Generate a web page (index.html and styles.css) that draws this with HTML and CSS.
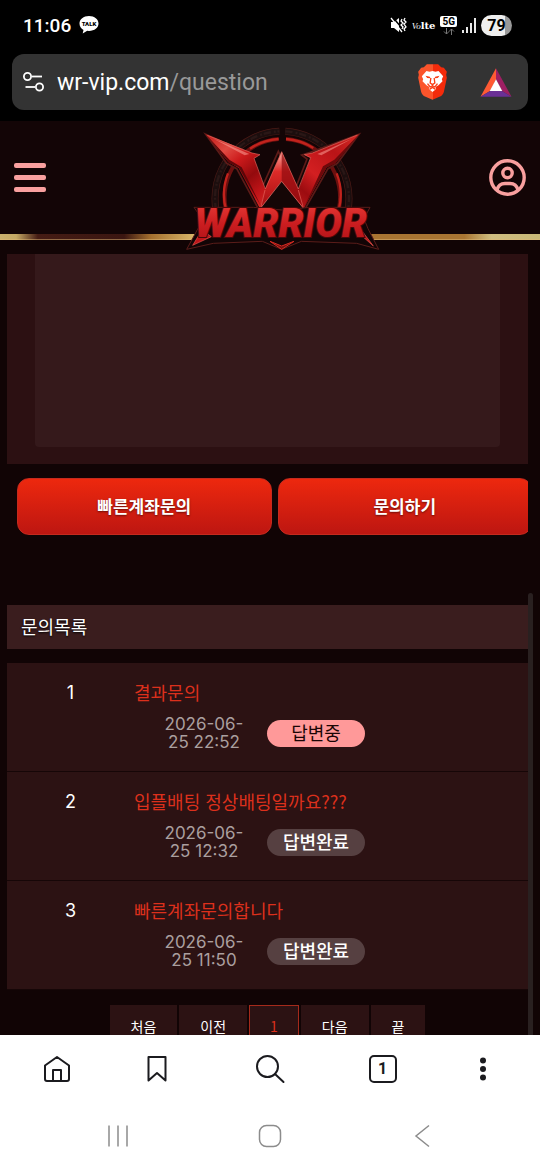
FILE: index.html
```html
<!DOCTYPE html>
<html lang="ko">
<head>
    <meta charset="UTF-8">
    <meta name="viewport" content="width=device-width, initial-scale=1.0">
    <title>문의목록 - WARRIOR</title>
    <link rel="stylesheet" href="styles.css">
</head>
<body>
    <div class="status-bar">
        <div class="status-left">
            <span class="clock">11:06</span>
            <svg class="talk" viewBox="0 0 20 18" width="20" height="18">
                <path d="M10 0C4.500 0 .5 3.300.5 7.500c0 2.700 1.500 5 4 6.400L3.700 17.500l4.500-2.800 1.800.2c5.500 0 9.500-3.300 9.500-7.400S15.500 0 10 0z" fill="#fff"/>
                <text x="10" y="10" text-anchor="middle">TALK</text>
            </svg>
        </div>
        <div class="status-right">
            <svg viewBox="0 0 17 16" width="17" height="16">
                <path d="M1 5h3l5-4v14l-5-4H1z" fill="#fff"/>
                <path d="M2.500 0l12 14" stroke="#000" stroke-width="1.500"/>
                <path d="M1 1l11 14M12 2l-1 2 2 2-2 2 2 2-1 2M15 1l-1 2 2 2-2 2 2 3-2 2 1 2" fill="none" stroke="#fff" stroke-width="1.300"/>
            </svg>
            <span class="volte"><i>Vo</i>lte</span>
            <span class="network">
                <b>5G</b>
                <svg viewBox="0 0 12 7" width="12" height="7"><path d="M3.500 0v6M1 3.500L3.500 6 6 3.500M8.500 7V1M6 3.500L8.500 1 11 3.500" fill="none" stroke="#777"/></svg>
            </span>
            <svg viewBox="0 0 14 15" width="14" height="15"><path d="M1 12v3M5 9v6M9 5v10M13 0v15" stroke="#fff" stroke-width="1.800"/></svg>
            <span class="battery">79</span>
        </div>
    </div>

    <div class="address-bar">
        <button class="tune" aria-label="사이트 설정">
            <svg viewBox="0 0 22 20" width="22" height="20" fill="none" stroke="#fff" stroke-width="1.800">
                <circle cx="4.500" cy="4.500" r="3.600"/><path d="M9 4.500h10"/>
                <circle cx="16.500" cy="15" r="3.600"/><path d="M2.500 15H12"/>
            </svg>
        </button>
        <button class="url">wr-vip.com<span>/question</span></button>
        <button class="shield" aria-label="Brave Shields">
            <svg viewBox="0 0 92 108" width="31" height="36">
                <defs>
                    <linearGradient id="brave" x1="0" x2="1"><stop offset=".5" stop-color="#fb542b"/><stop offset=".5" stop-color="#f42b0b"/></linearGradient>
                </defs>
                <path d="M29 1h34l9 9 8 1 9 12-2 9 2 9-9 43q-2 8-8 12L46 107 20 96q-6-4-8-12L3 41l2-9-2-9 9-12 8-1z" fill="url(#brave)"/>
                <path d="M28 21l9 2 9-2 9 2 9-2 14 16-4 9 2 6-12 12-9 5 2 6-11 9-11-9 2-6-9-5-12-12 2-6-4-9z" fill="#fff"/>
                <path d="M25 35l13 3 2 5-10-1zM67 35l-13 3-2 5 10-1z" fill="#f93d15"/>
                <path d="M41 42l-2 15 7 5 7-5-2-15M31 59l8 10 7-4 7 4 8-10M37 76l9-6 9 6" fill="none" stroke="#f93d15" stroke-width="4"/>
            </svg>
        </button>
        <button class="rewards" aria-label="Brave Rewards">
            <svg viewBox="0 0 96 88" width="32" height="29">
                <path d="M48 1L1 87l29-17 18-35z" fill="#ff5a34"/>
                <path d="M48 1l47 86-29-17-18-35z" fill="#9e1f63"/>
                <path d="M1 87h94L66 70H30z" fill="#6a3096"/>
                <path d="M48 34L29 70h38z" fill="#fff"/>
            </svg>
        </button>
    </div>

    <div class="page">
        <header class="header">
            <button class="menu" aria-label="메뉴"><span></span><span></span><span></span></button>
            <a class="logo" href="#" aria-label="WARRIOR">
                <svg viewBox="0 0 660 420" width="220" height="140">
                    <defs>
                        <linearGradient id="wing-left" gradientUnits="userSpaceOnUse" x1="107" y1="43" x2="300" y2="265">
                            <stop offset="0" stop-color="#c01a18"/><stop offset=".25" stop-color="#e04a42"/><stop offset=".42" stop-color="#cc1a1b"/><stop offset=".62" stop-color="#930a0d"/><stop offset=".8" stop-color="#c01418"/><stop offset="1" stop-color="#d93029"/>
                        </linearGradient>
                        <linearGradient id="wing-right" gradientUnits="userSpaceOnUse" x1="567" y1="43" x2="370" y2="265">
                            <stop offset="0" stop-color="#d22a24"/><stop offset=".3" stop-color="#b91417"/><stop offset=".6" stop-color="#d31f21"/><stop offset=".8" stop-color="#9c0c10"/><stop offset="1" stop-color="#bd181a"/>
                        </linearGradient>
                        <linearGradient id="peak" x1="0" y1="0" x2="0" y2="1">
                            <stop offset="0" stop-color="#ffb0a5"/><stop offset=".35" stop-color="#dd2b28"/><stop offset="1" stop-color="#a30c10"/>
                        </linearGradient>
                        <linearGradient id="letters" x1="0" y1="0" x2="0" y2="1">
                            <stop offset="0" stop-color="#e93c38"/><stop offset=".5" stop-color="#cb1d20"/><stop offset="1" stop-color="#ac1116"/>
                        </linearGradient>
                    </defs>
                    <g fill="none">
                        <path d="M138 270A202 202 0 0 1 328 34M346 34A202 202 0 0 1 534 270" stroke="#4a1a16" stroke-width="21"/>
                        <path d="M138 270A202 202 0 0 1 328 34M346 34A202 202 0 0 1 534 270" stroke="#1c0e0e" stroke-width="17"/>
                        <path d="M138 270A202 202 0 0 1 328 34M346 34A202 202 0 0 1 534 270" stroke="#2a1716" stroke-width="7" stroke-dasharray="22 9 6 5"/>
                        <path d="M168 270A175 175 0 0 1 326 57M348 57A175 175 0 0 1 506 270" stroke="#6c100f" stroke-width="12"/>
                        <path d="M168 270A175 175 0 0 1 174 160M500 160A175 175 0 0 1 506 270M240 86A175 175 0 0 1 326 57M348 57A175 175 0 0 1 430 84" stroke="#c2231d" stroke-width="7"/>
                    </g>
                    <path d="M107 43L170 130l30 16 68 126h134l72-126 28-16 65-87-146 54-26 8 16 12-36 92-50-115-52 115-35-94 18-10-26-8z" fill="#150606" stroke="#5d1b18" stroke-width="5"/>
                    <path d="M107 43l139 56 24 5-18 11 34 94 14 17-30 40-64-122-31-18z" fill="url(#wing-left)"/>
                    <path d="M567 43L426 99l-24 5 20 10-37 95-14 17 30 40 69-124 28-16z" fill="url(#wing-right)"/>
                    <path d="M107 43l72 77 36 22 59 118-68-118-29-13z" fill="#5c0709"/>
                    <path d="M567 43l-74 76-34 20-56 121 67-117 26-12z" fill="#6d090b"/>
                    <path d="M335 95l-50 113-15 58 65-83 66 83-16-58z" fill="url(#peak)"/>
                    <path d="M335 95v88l66 83-16-58z" fill="#8f0a0e" opacity=".7"/>
                    <path d="M128 55l110 47-14 4zM546 56l-104 46 12 4z" fill="#ffaaa0" opacity=".5"/>
                    <path d="M112 46l134 53 24 5-18 11 34 92 49-112 50 112 37-94-19-9 24-5 135-54M285 210l-12 50M385 210l14 50" fill="none" stroke="#e5675e" stroke-width="2"/>
                    <path d="M335 184l-63 80M335 184l65 80" fill="none" stroke="#f07a70" stroke-width="2"/>
                    <path d="M72 262H250L335 270 420 262H600L582 296 594 326 626 388 560 370 394 364 335 388 277 364 130 370 50 388 98 300z" fill="#120506" stroke="#5b1d1a" stroke-width="3"/>
                    <path d="M300 364l35 14 37-14-37 24z" fill="#74110f" stroke="#d52b22" stroke-width="3"/>
                    <path d="M96 330L68 376l56-26zM556 330l54 48-36-48z" fill="#bd151a" stroke="#e8544b" stroke-width="2"/>
                    <text class="logo-text" x="332" y="352" text-anchor="middle">WARRIOR</text>
                </svg>
            </a>
            <button class="user" aria-label="내 정보">
                <svg viewBox="0 0 37 37" width="37" height="37" fill="none" stroke="#f9a09f" stroke-width="3.400">
                    <circle cx="18.500" cy="18.500" r="16.700"/><circle cx="18.500" cy="14" r="4.700"/>
                    <path d="M8 31c1-4 4-6.500 8-6.500h5c4 0 7 2.500 8 6.500"/>
                </svg>
            </button>
        </header>

        <main class="content">
            <div class="write-box">
                <textarea class="write-text" aria-label="문의내용"></textarea>
            </div>
            <div class="write-buttons">
                <button class="btn-red">빠른계좌문의</button>
                <button class="btn-red">문의하기</button>
            </div>
            <h2 class="list-title">문의목록</h2>
            <ul class="question-list">
                <li class="question">
                    <span class="num">1</span>
                    <div class="info">
                        <a href="#">결과문의</a>
                        <div class="meta"><time>2026-06-<br>25 22:52</time><span class="badge wait">답변중</span></div>
                    </div>
                </li>
                <li class="question">
                    <span class="num">2</span>
                    <div class="info">
                        <a href="#">입플배팅 정상배팅일까요???</a>
                        <div class="meta"><time>2026-06-<br>25 12:32</time><span class="badge">답변완료</span></div>
                    </div>
                </li>
                <li class="question">
                    <span class="num">3</span>
                    <div class="info">
                        <a href="#">빠른계좌문의합니다</a>
                        <div class="meta"><time>2026-06-<br>25 11:50</time><span class="badge">답변완료</span></div>
                    </div>
                </li>
            </ul>
            <nav class="pagination">
                <a href="#">처음</a>
                <a href="#">이전</a>
                <a href="#" class="active">1</a>
                <a href="#">다음</a>
                <a href="#">끝</a>
            </nav>
        </main>
        <div class="scrollbar"></div>
    </div>

    <nav class="toolbar">
        <button aria-label="홈">
            <svg viewBox="0 0 28 28" width="28" height="28"><path d="M2 10.500L14 2l12 8.500V24q0 2-2 2H4q-2 0-2-2zM10 26V15h8v11"/></svg>
        </button>
        <button aria-label="북마크">
            <svg viewBox="0 0 28 28" width="28" height="28"><path d="M5.500 2h17v23.500L14 18l-8.500 7.500z"/></svg>
        </button>
        <button class="search" aria-label="검색">
            <svg viewBox="0 0 30 30" width="30" height="30"><circle cx="12.500" cy="12.500" r="10.500"/><path d="M20 20l8.500 8"/></svg>
        </button>
        <button aria-label="탭"><span class="tab-count">1</span></button>
        <button aria-label="더보기">
            <svg class="dots" viewBox="0 0 28 28" width="28" height="28"><circle cx="14" cy="5.500" r="3"/><circle cx="14" cy="14" r="3"/><circle cx="14" cy="22.500" r="3"/></svg>
        </button>
    </nav>
    <nav class="system-nav">
        <button aria-label="최근 앱">
            <svg viewBox="0 0 24 24" width="24" height="24"><path d="M3 1.500v21M12 1.500v21M21 1.500v21"/></svg>
        </button>
        <button aria-label="홈 화면">
            <svg viewBox="0 0 24 24" width="24" height="24"><rect x="1.500" y="1.500" width="21" height="21" rx="7"/></svg>
        </button>
        <button aria-label="뒤로">
            <svg viewBox="0 0 24 24" width="24" height="24"><path d="M19 1.500L6 12l13 10.500"/></svg>
        </button>
    </nav>
</body>
</html>
```
FILE: styles.css
```css
* {
    box-sizing: border-box;
}
body {
    margin: 0;
    height: 100vh;
    overflow: hidden;
    display: flex;
    flex-direction: column;
    background: #000;
    color: #fff;
    font-family: "Noto Sans CJK KR", sans-serif;
}
button {
    border: 0;
    padding: 0;
    background: none;
    color: inherit;
    font-family: inherit;
}
a {
    text-decoration: none;
}
svg {
    display: block;
}

/* status bar */
.status-bar {
    flex: none;
    height: 54px;
    padding: 0 28px 4px 23px;
    display: flex;
    justify-content: space-between;
    align-items: center;
    font-family: Roboto, sans-serif;
}
.status-left,
.status-right {
    display: flex;
    align-items: center;
}
.status-left {
    gap: 8px;
}
.status-right {
    gap: 5px;
}
.clock {
    font-size: 19px;
    font-weight: 500;
}
.talk text {
    font: 900 6px Roboto, sans-serif;
    fill: #000;
}
.volte {
    font: bold 10px "DejaVu Serif", serif;
}
.volte i {
    font: italic 9px "Liberation Serif", serif;
}
.network {
    display: flex;
    flex-direction: column;
    align-items: center;
    gap: 1px;
}
.network b {
    padding: 0 2px;
    border-radius: 2px;
    background: #fff;
    color: #000;
    font-size: 10px;
    line-height: 11px;
}
.battery {
    width: 31px;
    border-radius: 11px;
    background: linear-gradient(90deg, #eee 79%, #999 79%);
    color: #000;
    font-size: 16px;
    font-weight: 700;
    line-height: 21px;
    text-align: center;
}

/* address bar */
.address-bar {
    flex: none;
    height: 56px;
    margin: 0 12px 11px;
    padding: 0 16px 0 11px;
    display: flex;
    align-items: center;
    border-radius: 12px;
    background: #333;
}
.url {
    flex: 1;
    margin-left: 12px;
    font-family: Roboto, sans-serif;
    font-size: 23px;
    text-align: left;
}
.url span {
    color: #999;
}
.rewards {
    margin-left: 32px;
}

/* page */
.page {
    flex: 1;
    min-height: 0;
    overflow: hidden;
    position: relative;
    background: #110405;
}
.header {
    position: relative;
    height: 119px;
    padding: 0 14px 6px;
    display: flex;
    justify-content: space-between;
    align-items: center;
    background: #130506;
}
.header::after {
    content: "";
    position: absolute;
    left: 0;
    right: 0;
    bottom: 0;
    height: 5px;
    border-bottom: 1px solid rgba(225, 185, 120, 0.5);
    background: linear-gradient(90deg, #c9b06d 0, #c4a864 3%, #451c14 7%, #3b1611 23%, #a5702f 28%, #d9b568 36%, #a97532 65%, #a97532 86%, #cfbd80 91%, #c9b877 100%);
}
.menu {
    width: 32px;
    display: grid;
    gap: 7px;
}
.menu span {
    height: 5px;
    border-radius: 2px;
    background: #f9a09f;
}
.logo {
    position: absolute;
    top: -1px;
    left: 50%;
    z-index: 1;
    margin-left: -100px;
}
.logo-text {
    font: italic 900 119px Roboto, sans-serif;
    fill: url(#letters);
    stroke: #4a0809;
    stroke-width: 6px;
    paint-order: stroke;
}
.content {
    padding: 14px 12px 0 7px;
}
.write-box {
    padding: 0 28px 17px;
    background: #2c1012;
}
.write-text {
    display: block;
    width: 100%;
    height: 193px;
    border: 0;
    border-radius: 0 0 4px 4px;
    background: #35191b;
    color: #fff;
    resize: none;
}
.write-buttons {
    display: flex;
    gap: 6px;
    margin: 14px 0 70px;
    padding-left: 10px;
    overflow: hidden;
}
.btn-red {
    flex: none;
    width: calc(50% - 1px);
    height: 57px;
    padding-bottom: 3px;
    border: 1px solid #c52a1e;
    border-radius: 12px;
    background: linear-gradient(#ed280e, #bd1611);
    font-size: 17px;
    font-weight: 700;
    text-shadow: 0 1px 2px rgba(0, 0, 0, 0.5);
}
.list-title {
    margin: 0 0 14px;
    padding: 0 14px 2px;
    background: #3a1d1e;
    font-size: 18px;
    font-weight: 400;
    line-height: 42px;
    text-shadow: 0 1px 2px #000;
}
.question-list {
    margin: 0;
    padding: 0;
    list-style: none;
}
.question {
    display: flex;
    padding: 16px 0 20px;
    border-bottom: 1px solid #160607;
    background: #2c1213;
    font-size: 18px;
    line-height: 26px;
}
.num {
    width: 127px;
    font-family: Inter, sans-serif;
    line-height: 28px;
    text-align: center;
}
.info a {
    color: #dc301c;
}
.meta {
    display: flex;
    align-items: center;
    gap: 21px;
    padding: 10px 0 0 28px;
}
.meta time {
    width: 84px;
    color: #aa9f9f;
    font-family: Inter, sans-serif;
    font-size: 17px;
    line-height: 18px;
    text-align: center;
    white-space: nowrap;
}
.badge {
    width: 98px;
    padding-bottom: 2px;
    border-radius: 14px;
    background: #564041;
    font-weight: 500;
    line-height: 25px;
    text-align: center;
}
.badge.wait {
    background: #ff9999;
    color: #1a0505;
    font-weight: 400;
}
.pagination {
    display: flex;
    justify-content: center;
    gap: 2px;
    padding-top: 15px;
}
.pagination a {
    padding: 0 20px;
    border: 1px solid #2c1213;
    background: #2c1213;
    color: #fff;
    font-size: 14px;
    line-height: 40px;
}
.pagination a.active {
    border-color: #a52a1b;
    color: #dc301c;
}
.scrollbar {
    position: absolute;
    top: 472px;
    right: 7px;
    bottom: 0;
    width: 5px;
    border-radius: 3px 3px 0 0;
    background: #292020;
}

/* bottom bars */
.toolbar,
.system-nav {
    flex: none;
    display: flex;
    align-items: center;
    background: #fff;
}
.toolbar {
    height: 68px;
    padding: 0 7px;
}
.toolbar button,
.system-nav button {
    flex: 4;
    display: flex;
    justify-content: center;
}
.toolbar .search {
    flex: 5;
}
.toolbar svg {
    fill: none;
    stroke: #1b1b1f;
    stroke-width: 2;
    stroke-linejoin: round;
    stroke-linecap: round;
}
.toolbar .dots {
    fill: #1b1b1f;
    stroke: none;
}
.tab-count {
    width: 28px;
    border: 2px solid #1b1b1f;
    border-radius: 5px;
    color: #1b1b1f;
    font: 700 16px/24px Roboto, sans-serif;
}
.system-nav {
    height: 67px;
    padding: 0 42px 2px;
}
.system-nav svg {
    fill: none;
    stroke: #8c8c8c;
    stroke-width: 1.5;
}
```
